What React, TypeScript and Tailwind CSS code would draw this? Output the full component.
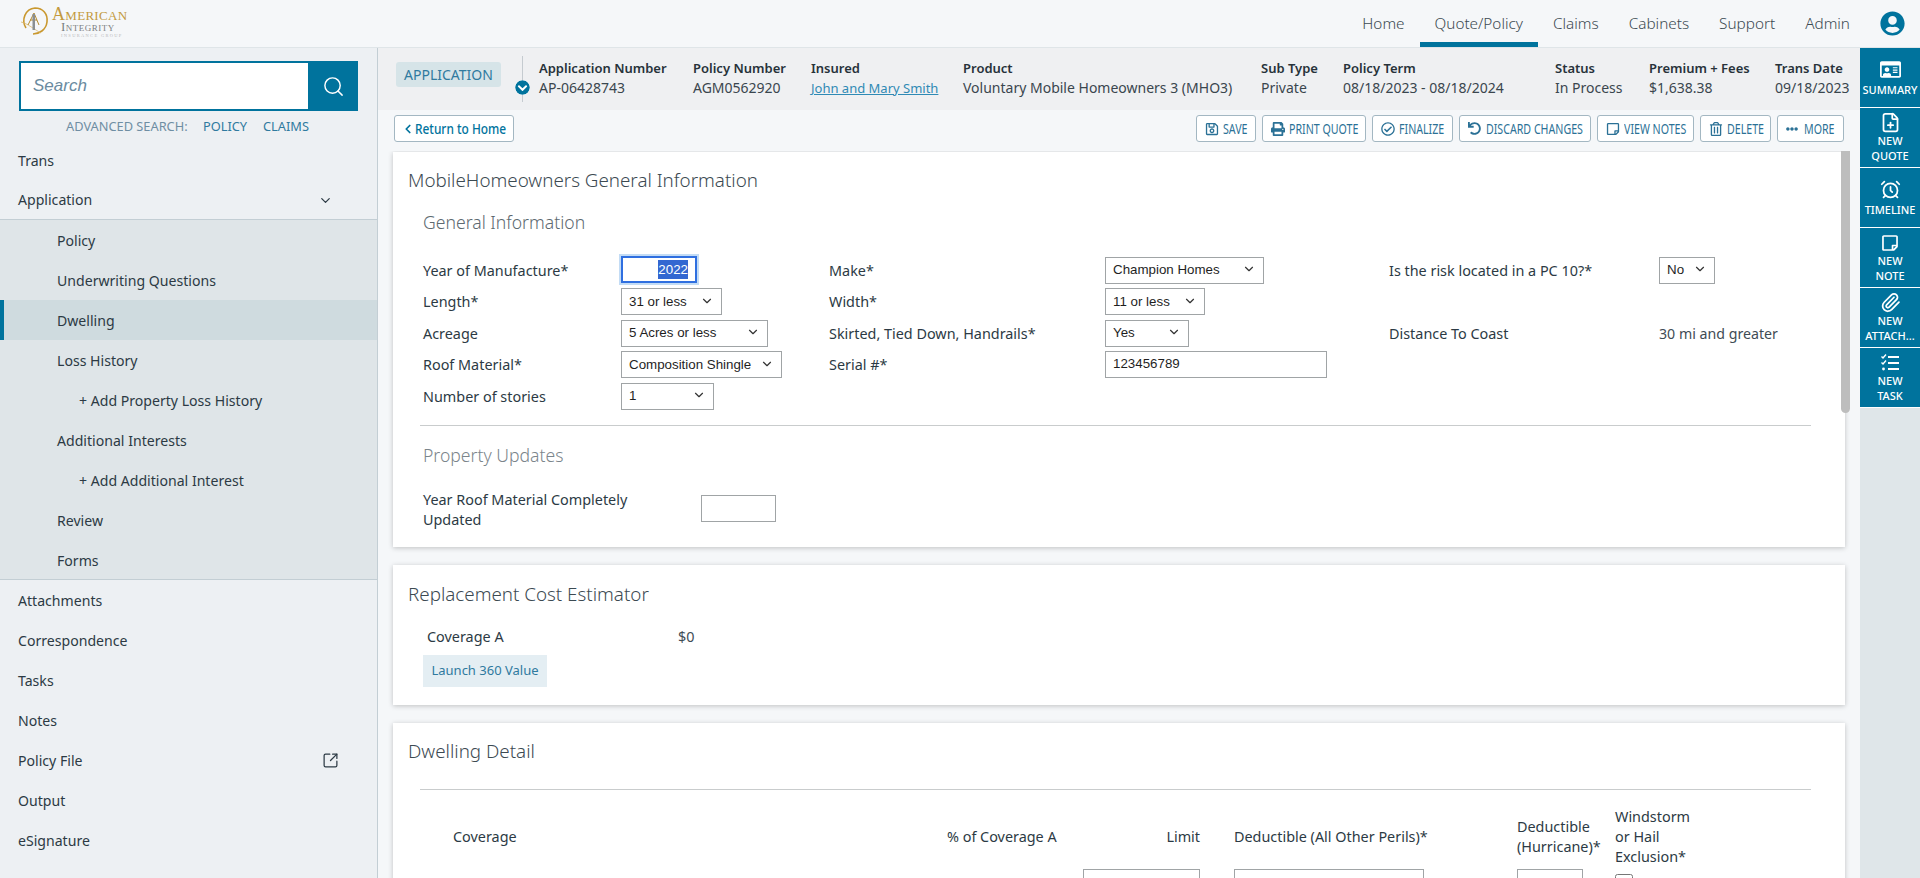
import React from "react";
import { ChevronDown, ChevronLeft, Search, SquareArrowOutUpRight, FilePlus, AlarmClock, Paperclip } from "lucide-react";
import { FaRegIdCard, FaRegSave, FaPrint, FaRegCheckCircle, FaUndo, FaRegStickyNote, FaRegTrashAlt, FaEllipsisH, FaUserCircle, FaChevronCircleDown } from "react-icons/fa";

function Logo() {
  return (
    <div className="flex items-start gap-[2px] pl-[20px] pt-[6px]">
      <svg width="30" height="30" viewBox="0 0 30 30" fill="none">
        <path d="M6 22C1 14 5 3 15 2c8 0 13 6 12 14-1 8-8 12-14 12" stroke="#c9982f" strokeWidth="1.6" />
        <path d="M1 16c6 1 14 8 20 11" stroke="#d9b66a" strokeWidth="0.8" />
        <path d="M8 19 14 7l5 12M10 14h7" stroke="#b58a2c" strokeWidth="1" />
        <rect x="12.5" y="8" width="2.5" height="16" fill="#8a8f92" />
      </svg>
      <div className="flex flex-col items-start font-['Liberation_Serif',serif]">
        <span className="text-[18px] leading-[16px] text-[#c39a3e] [font-variant:small-caps] tracking-[0.3px]">American</span>
        <span className="ml-[9px] text-[13px] leading-[10px] text-[#7c8082] [font-variant:small-caps] tracking-[0.5px]">Integrity</span>
        <span className="ml-[9px] mt-[1px] text-[4.5px] leading-[5px] text-[#b9b9b9] tracking-[1.3px]">INSURANCE GROUP</span>
      </div>
    </div>
  );
}

const nav = ["Home", "Quote/Policy", "Claims", "Cabinets", "Support", "Admin"];

function TopBar() {
  return (
    <header className="flex h-[48px] shrink-0 justify-between border-b border-[#dfe5e8] bg-[#f5f7f9]">
      <Logo />
      <div className="flex items-stretch">
        <nav className="flex h-[47px]">
          {nav.map((n) => (
            <div
              key={n}
              className={
                n === "Quote/Policy"
                  ? "flex items-center border-b-[5px] border-[#00739d] px-[15px] pt-[5px] text-[15.3px] text-[#3c4a52] font-light"
                  : "flex items-center px-[15px] text-[15.3px] text-[#3c4a52] font-light"
              }
            >
              {n}
            </div>
          ))}
        </nav>
        <div className="flex w-[55px] items-center justify-center pb-[1px]">
          <FaUserCircle size={25} className="text-[#00739d]" />
        </div>
      </div>
    </header>
  );
}

function Row({ label, className = "", children }: { label: string; className?: string; children?: React.ReactNode }) {
  return (
    <div className={"flex h-[40px] items-center justify-between pt-[1px] text-[14.1px] text-[#2c3a44] " + className}>
      <span>{label}</span>
      {children}
    </div>
  );
}

function Sidebar() {
  const sub: [string, string][] = [
    ["Policy", "pl-[57px]"],
    ["Underwriting Questions", "pl-[57px]"],
    ["Dwelling", "pl-[53px] border-l-[4px] border-[#00739d] bg-[#cfdbdf]"],
    ["Loss History", "pl-[57px]"],
    ["+ Add Property Loss History", "pl-[79px]"],
    ["Additional Interests", "pl-[57px]"],
    ["+ Add Additional Interest", "pl-[79px]"],
    ["Review", "pl-[57px]"],
    ["Forms", "pl-[57px]"],
  ];
  return (
    <aside className="w-[378px] shrink-0 border-r border-[#c3ced4] bg-[#edf0f3]">
      <div className="h-[92px] px-[19px] pt-[13px]">
        <div className="flex h-[50px] w-[339px] border-2 border-[#00739d] bg-white">
          <div className="flex flex-1 items-center pl-[12px] font-['Liberation_Sans',sans-serif] text-[17px] italic text-[#6b8ba0]">Search</div>
          <div className="-my-[2px] -mr-[2px] flex w-[50px] items-center justify-center bg-[#00739d]">
            <Search size={23} strokeWidth={1.5} className="text-white" />
          </div>
        </div>
        <div className="mt-[6px] flex h-[20px] items-center pl-[47px] text-[12.8px] text-[#6f8ea3]">
          <span className="w-[137px]">ADVANCED SEARCH:</span>
          <span className="w-[60px] text-[#2f7a9f]">POLICY</span>
          <span className="text-[#2f7a9f]">CLAIMS</span>
        </div>
      </div>
      <Row label="Trans" className="px-[18px]" />
      <Row label="Application" className="border-b border-[#c3ced4] pl-[18px] pr-[44px]">
        <ChevronDown size={15} strokeWidth={2} className="text-[#2c3a44]" />
      </Row>
      <div className="h-[360px] overflow-hidden border-b border-[#c3ced4] bg-[#dfe5e8]">
        {sub.map(([l, c]) => (
          <Row key={l} label={l} className={c} />
        ))}
      </div>
      {["Attachments", "Correspondence", "Tasks", "Notes"].map((l) => (
        <Row key={l} label={l} className="px-[18px]" />
      ))}
      <Row label="Policy File" className="pl-[18px] pr-[38px]">
        <SquareArrowOutUpRight size={17} strokeWidth={1.75} className="text-[#2c3a44]" />
      </Row>
      {["Output", "eSignature"].map((l) => (
        <Row key={l} label={l} className="px-[18px]" />
      ))}
    </aside>
  );
}

function Info({ label, value, w, link }: { label: string; value: string; w: string; link?: boolean }) {
  return (
    <div className={"shrink-0 " + w}>
      <div className="text-[13px] leading-[20px] font-semibold text-[#27323a]">{label}</div>
      <div className={link ? "text-[13px] leading-[20px] text-[#2f8ab5] underline" : "text-[14px] leading-[20px] text-[#3a464e]"}>{value}</div>
    </div>
  );
}

function InfoStrip() {
  return (
    <div className="flex h-[62px] shrink-0 items-center bg-[#eff0f2] pl-[18px]">
      <div className="mb-[9px] flex h-[25px] w-[105px] items-center justify-center rounded-[3px] bg-[#d6e4e8] text-[14px] text-[#2f7a9f]">APPLICATION</div>
      <div className="relative ml-[21px] mr-[16px] h-[46px] w-px bg-[#c5cbd0]">
        <FaChevronCircleDown size={15} className="absolute -left-[7px] top-[24px] rounded-full bg-white text-[#00739d]" />
      </div>
      <div className="-mt-[2px] flex">
        <Info w="w-[154px]" label="Application Number" value="AP-06428743" />
        <Info w="w-[118px]" label="Policy Number" value="AGM0562920" />
        <Info w="w-[152px]" label="Insured" value="John and Mary Smith" link />
        <Info w="w-[298px]" label="Product" value="Voluntary Mobile Homeowners 3 (MHO3)" />
        <Info w="w-[82px]" label="Sub Type" value="Private" />
        <Info w="w-[212px]" label="Policy Term" value="08/18/2023 - 08/18/2024" />
        <Info w="w-[94px]" label="Status" value="In Process" />
        <Info w="w-[126px]" label="Premium + Fees" value="$1,638.38" />
        <Info w="w-[80px]" label="Trans Date" value="09/18/2023" />
      </div>
    </div>
  );
}

function ToolBtn({ icon, label, w }: { icon: React.ReactNode; label: string; w: string }) {
  return (
    <button className={"flex h-[27px] items-center rounded-[3px] border border-[#a3b7c2] bg-white pl-[8px] text-[#2b7196] " + w}>
      <span className="flex w-[18px] shrink-0 items-center">{icon}</span>
      <span className="origin-left scale-x-[.76] text-[14px] whitespace-nowrap">{label}</span>
    </button>
  );
}

function Toolbar() {
  return (
    <div className="flex h-[41px] shrink-0 items-start justify-between bg-[#f5f7f9] pl-[16px] pr-[16px] pt-[5px]">
      <button className="flex h-[27px] w-[120px] items-center rounded-[3px] border border-[#a3b7c2] bg-white pl-[6px] text-[#00739d]">
        <ChevronLeft size={14} strokeWidth={3} className="shrink-0" />
        <span className="origin-left scale-x-[.85] text-[14px] font-medium whitespace-nowrap">Return to Home</span>
      </button>
      <div className="flex gap-[6px]">
        <ToolBtn w="w-[60px]" icon={<FaRegSave size={14} />} label="SAVE" />
        <ToolBtn w="w-[104px]" icon={<FaPrint size={14} />} label="PRINT QUOTE" />
        <ToolBtn w="w-[81px]" icon={<FaRegCheckCircle size={14} />} label="FINALIZE" />
        <ToolBtn w="w-[132px]" icon={<FaUndo size={13} />} label="DISCARD CHANGES" />
        <ToolBtn w="w-[97px]" icon={<FaRegStickyNote size={14} />} label="VIEW NOTES" />
        <ToolBtn w="w-[71px]" icon={<FaRegTrashAlt size={14} />} label="DELETE" />
        <ToolBtn w="w-[67px]" icon={<FaEllipsisH size={12} />} label="MORE" />
      </div>
    </div>
  );
}

function Sel({ w, value }: { w: string; value: string }) {
  return (
    <div className={"relative h-[27px] " + w}>
      <select
        defaultValue={value}
        className="h-[27px] w-full appearance-none rounded-none border border-[#a0a4a6] bg-white pl-[7px] font-['Liberation_Sans',sans-serif] text-[13.33px] text-[#1f1f1f]"
      >
        <option>{value}</option>
      </select>
      <ChevronDown size={14} strokeWidth={2} className="pointer-events-none absolute right-[8px] top-[6px] text-[#333]" />
    </div>
  );
}

function Lbl({ children }: { children: React.ReactNode }) {
  return <div className="flex h-[27px] items-center pt-[2px] text-[14.4px] text-[#2c3a44]">{children}</div>;
}

function Card({ className = "", children }: { className?: string; children: React.ReactNode }) {
  return <section className={"bg-white px-[15px] shadow-[0_1px_5px_rgba(0,0,0,0.22)] " + className}>{children}</section>;
}

function GeneralCard() {
  return (
    <Card className="pt-[17px] pb-[17px]">
      <h2 className="-mt-[1px] text-[18.8px] leading-[24px] font-light text-[#3c4a52]">MobileHomeowners General Information</h2>
      <h3 className="mt-[18px] ml-[15px] text-[17.6px] leading-[24px] font-light text-[#5d6970]">General Information</h3>
      <div className="mt-[22px] ml-[15px] grid grid-cols-[198px_208px_276px_284px_270px_100px] auto-rows-[31.5px]">
        <Lbl>Year of Manufacture*</Lbl>
        <div className="flex h-[27px] w-[76px] items-center justify-end border-2 border-[#2f6fe0] pr-[7px] font-['Liberation_Sans',sans-serif] text-[13.33px] shadow-[0_0_0_2px_#c3dcf5]">
          <span className="bg-[#3367d1] text-white">2022</span>
        </div>
        <Lbl>Make*</Lbl>
        <Sel w="w-[159px]" value="Champion Homes" />
        <Lbl>Is the risk located in a PC 10?*</Lbl>
        <Sel w="w-[56px]" value="No" />

        <Lbl>Length*</Lbl>
        <Sel w="w-[101px]" value="31 or less" />
        <Lbl>Width*</Lbl>
        <Sel w="w-[100px]" value="11 or less" />
        <div className="col-span-2" />

        <Lbl>Acreage</Lbl>
        <Sel w="w-[147px]" value="5 Acres or less" />
        <Lbl>Skirted, Tied Down, Handrails*</Lbl>
        <Sel w="w-[84px]" value="Yes" />
        <Lbl>Distance To Coast</Lbl>
        <Lbl>
          <span className="whitespace-nowrap text-[14.2px] text-[#3f4c55]">30 mi and greater</span>
        </Lbl>

        <Lbl>Roof Material*</Lbl>
        <Sel w="w-[161px]" value="Composition Shingle" />
        <Lbl>Serial #*</Lbl>
        <div className="col-span-3 flex h-[27px] w-[222px] items-center border border-[#a0a4a6] pl-[7px] font-['Liberation_Sans',sans-serif] text-[13.33px] text-[#1f1f1f]">123456789</div>

        <Lbl>Number of stories</Lbl>
        <Sel w="w-[93px]" value="1" />
      </div>
      <hr className="ml-[12px] mr-[19px] mt-[11.5px] border-t border-[#c9cccd]" />
      <h3 className="mt-[17px] ml-[15px] text-[17.6px] leading-[24px] font-light text-[#7b858b]">Property Updates</h3>
      <div className="mt-[23px] ml-[15px] flex items-center">
        <div className="w-[278px] pr-[20px] text-[14.4px] leading-[20px] text-[#2c3a44]">Year Roof Material Completely Updated</div>
        <div className="mb-[4px] h-[27px] w-[75px] border border-[#a0a4a6]" />
      </div>
    </Card>
  );
}

function CostCard() {
  return (
    <Card className="mt-[18px] h-[140px] pt-[17px]">
      <h2 className="text-[18.8px] leading-[24px] font-light text-[#3c4a52]">Replacement Cost Estimator</h2>
      <div className="mt-[21px] ml-[19px] flex text-[14.4px] leading-[20px] text-[#2c3a44]">
        <span className="w-[251px]">Coverage A</span>
        <span className="text-[#3f4c55]">$0</span>
      </div>
      <button className="mt-[8px] ml-[15px] h-[32px] w-[124px] bg-[#e4eef3] text-[13px] text-[#2f7a9f]">Launch 360 Value</button>
    </Card>
  );
}

function DwellingCard() {
  const h = "text-[14.4px] leading-[20px] text-[#2c3a44]";
  const box = "h-[27px] border border-[#a0a4a6] font-['Liberation_Sans',sans-serif] text-[13.33px] leading-[27px]";
  return (
    <Card className="mt-[18px] pt-[16px] pb-[20px]">
      <h2 className="text-[18.8px] leading-[24px] font-light text-[#3c4a52]">Dwelling Detail</h2>
      <hr className="ml-[12px] mr-[19px] mt-[26px] border-t border-[#c9cccd]" />
      <div className="mt-[17px] ml-[45px] grid grid-cols-[494px_136px_117px_317px_98px_120px] items-center gap-y-[2px]">
        <div className={h}>Coverage</div>
        <div className={h + " whitespace-nowrap"}>% of Coverage A</div>
        <div className={h + " text-right"}>Limit</div>
        <div className={h + " pl-[34px] whitespace-nowrap"}>Deductible (All Other Perils)*</div>
        <div className={h}>Deductible (Hurricane)*</div>
        <div className={h + " w-[80px]"}>Windstorm or Hail Exclusion*</div>
        <div />
        <div />
        <div className={box + " pr-[50px] text-right"}>$</div>
        <div className="pl-[34px]">
          <div className={box + " w-[190px] pl-[11px]"}>$</div>
        </div>
        <div className={box + " w-[66px]"} />
        <div className="h-[27px] pt-[5px]">
          <input type="checkbox" className="block h-[18px] w-[18px]" />
        </div>
      </div>
    </Card>
  );
}

function TaskIcon() {
  return (
    <svg width="20" height="20" viewBox="0 0 20 20" fill="none" stroke="currentColor" strokeWidth="1.8">
      <path d="M1.5 3.5 3 5l3-3.5M1.5 9.5 3 11l3-3.5" strokeWidth="1.4" />
      <circle cx="3.5" cy="16" r="1.4" fill="currentColor" stroke="none" />
      <path d="M8 4h11M8 10h11M8 16h11" />
    </svg>
  );
}

function RightRail() {
  const items: [React.ReactNode, string[]][] = [
    [<FaRegIdCard size={21} />, ["SUMMARY"]],
    [<FilePlus size={21} strokeWidth={2} />, ["NEW", "QUOTE"]],
    [<AlarmClock size={21} strokeWidth={2} />, ["TIMELINE"]],
    [<FaRegStickyNote size={18} />, ["NEW", "NOTE"]],
    [<Paperclip size={21} strokeWidth={2} />, ["NEW", "ATTACH..."]],
    [<TaskIcon />, ["NEW", "TASK"]],
  ];
  return (
    <aside className="w-[60px] shrink-0 bg-[#dfe6e9]">
      {items.map(([icon, lines], i) => (
        <div key={i} className="flex h-[60px] flex-col items-center justify-center border-b border-white bg-[#00739d] text-white">
          <div className="flex h-[21px] items-center">{icon}</div>
          <div className={lines.length === 1 ? "mt-[2px] text-center text-[11px] leading-[15px] font-medium whitespace-nowrap" : "text-center text-[11px] leading-[15px] font-medium whitespace-nowrap"}>
            {lines.map((l) => (
              <div key={l}>{l}</div>
            ))}
          </div>
        </div>
      ))}
    </aside>
  );
}

export default function App() {
  return (
    <div className="flex h-[878px] flex-col overflow-hidden bg-[#f5f7f9] font-['Noto_Sans',sans-serif]">
      <TopBar />
      <div className="flex min-h-0 flex-1">
        <Sidebar />
        <main className="flex min-w-0 flex-1 flex-col">
          <InfoStrip />
          <Toolbar />
          <div className="relative min-h-0 flex-1 overflow-hidden pt-[1px] pl-[15px] pr-[15px]">
            <div className="absolute right-[10px] top-[-4px] h-[266px] w-[9px] rounded-full bg-[#bdbdbd]" />
            <GeneralCard />
            <CostCard />
            <DwellingCard />
          </div>
        </main>
        <RightRail />
      </div>
    </div>
  );
}
